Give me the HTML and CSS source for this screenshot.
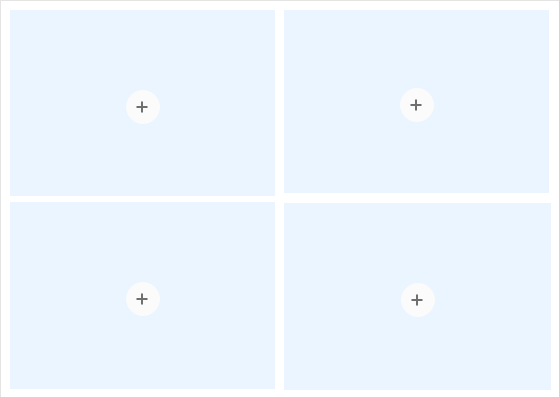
FILE: index.html
```html
<!DOCTYPE html>
<html>
<head>
<meta charset="utf-8">
<link rel="stylesheet" href="styles.css">
</head>
<body>
<div class="frame">
  <div class="grid">
    <div class="panel panel-tl"><span class="add"><svg class="plus" viewBox="0 0 12 12"><path d="M6 0.5V11.5M0.5 6H11.5"/></svg></span></div>
    <div class="panel panel-tr"><span class="add"><svg class="plus" viewBox="0 0 12 12"><path d="M6 0.5V11.5M0.5 6H11.5"/></svg></span></div>
    <div class="panel panel-bl"><span class="add"><svg class="plus" viewBox="0 0 12 12"><path d="M6 0.5V11.5M0.5 6H11.5"/></svg></span></div>
    <div class="panel panel-br"><span class="add"><svg class="plus" viewBox="0 0 12 12"><path d="M6 0.5V11.5M0.5 6H11.5"/></svg></span></div>
  </div>
</div>
</body>
</html>
```
FILE: styles.css
```css
html, body {
  margin: 0;
  padding: 0;
  background: #ffffff;
  font-family: "Liberation Sans", Arial, sans-serif;
}
.frame {
  width: 559px;
  height: 397px;
  box-sizing: border-box;
  border-top: 1px solid #e4e4e4;
  border-left: 1px solid #e4e4e4;
  padding: 9px 0 0 9px;
}
.grid {
  display: grid;
  grid-template-columns: 265px 267px;
  column-gap: 9px;
  row-gap: 6px;
  align-items: start;
  justify-items: start;
}
.panel {
  background: #eaf5ff;
  display: flex;
  align-items: center;
  justify-content: center;
  box-sizing: border-box;
  padding-top: 7px;
}
.panel-tl { width: 265px; height: 186px; }
.panel-tr { width: 265px; height: 183px; }
.panel-bl { width: 265px; height: 187px; }
.panel-br { width: 267px; height: 187px; margin-top: 1px; }
.add {
  width: 34px;
  height: 34px;
  border-radius: 50%;
  background: #fbfbfb;
  display: flex;
  align-items: center;
  justify-content: center;
}
.plus {
  width: 12px;
  height: 12px;
  margin-left: -1px;
}
.plus path {
  stroke: #6f6f6f;
  stroke-width: 2;
  fill: none;
}
```
